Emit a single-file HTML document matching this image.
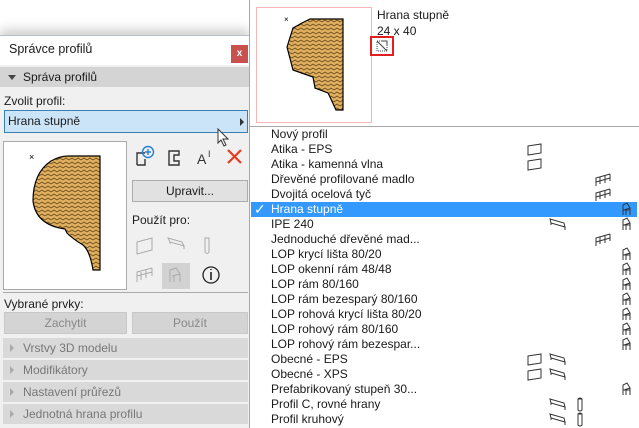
<!DOCTYPE html>
<html><head><meta charset="utf-8"><style>
*{margin:0;padding:0;box-sizing:border-box}
body{width:639px;height:428px;overflow:hidden;background:#fff;font-family:"Liberation Sans",sans-serif;font-size:12px;color:#1a1a1a;position:relative}
.a{position:absolute;white-space:nowrap}
#lp{position:absolute;left:0;top:35px;width:249px;height:393px;background:#f0f0f0;box-shadow:0 -6px 10px rgba(0,0,0,.18)}
.sec{position:absolute;left:3px;width:245px;height:20px;background:#d9d9d9;color:#777;padding-left:20px;line-height:20px}
.sec:before{content:"";position:absolute;left:7px;top:6px;border-left:4px solid #aaa;border-top:4px solid transparent;border-bottom:4px solid transparent}
.row{position:absolute;left:251px;width:386px;height:15px;line-height:15px;padding-left:20px}
</style></head><body>
<svg width="0" height="0" style="position:absolute"><defs>
<pattern id="hp" width="6" height="4" patternUnits="userSpaceOnUse"><rect width="6" height="4" fill="#e0b060"/><path d="M0,3 L3,1 L6,3" stroke="#6b4a1a" stroke-width=".8" fill="none"/></pattern>
</defs></svg>

<div id="lp">
 <div class="a" style="left:0;top:0;width:249px;height:30px;background:#fff;border-top:1px solid #b8bfc8"></div>
 <div class="a" style="left:9px;top:7px;font-size:12.5px">Správce profilů</div>
 <div class="a" style="left:231px;top:10px;width:17px;height:18px;background:#c8504f;color:#fff;font-size:10px;font-weight:bold;text-align:center;line-height:17px">x</div>
 <div class="a" style="left:0;top:32px;width:249px;height:20px;background:#d4d4d4"></div>
 <div class="a" style="left:8px;top:40px;border-top:5px solid #444;border-left:4px solid transparent;border-right:4px solid transparent"></div>
 <div class="a" style="left:23px;top:35px">Správa profilů</div>
 <div class="a" style="left:4px;top:59px">Zvolit profil:</div>
 <div class="a" style="left:4px;top:75px;width:244px;height:23px;background:#cce4f7;border:1px solid #3c7fb1;line-height:21px;padding-left:3px">Hrana stupně</div>
 <div class="a" style="left:240px;top:83px;border-left:4px solid #333;border-top:4px solid transparent;border-bottom:4px solid transparent"></div>
 <svg class="a" style="left:217px;top:93px" width="14" height="20"><path d="M1,1 L1,15 L4,12 L7,18 L9,17 L6,11 L11,11 Z" fill="#fff" stroke="#333"/></svg>
 <div class="a" style="left:3px;top:106px;width:124px;height:149px;background:#fff;border:1px solid #aaa"></div>
 <svg class="a" style="left:3px;top:106px" width="124" height="149">
  <text x="26" y="19" font-size="9" font-family="Liberation Sans">×</text>
  <path d="M97,15 L97,129 L90,129 Q87,110 80,104 Q70,98 64,92 L62,88 Q33,84 30,60 Q30,32 48,20 Q57,15 65,15 Z" fill="url(#hp)" stroke="#000" stroke-width="1.2"/>
 </svg>
 <svg class="a" style="left:135px;top:110px" width="115" height="24" fill="none" stroke="#333" stroke-width="1.4">
  <path d="M2,20 L2,8 L10,8 M2,20 L10,20 L10,14"/><circle cx="13" cy="7" r="5.5" stroke="#2a7fd4"/><path d="M13,4 V10 M10,7 H16" stroke="#2a7fd4"/>
  <path d="M34,20 L34,6 L44,6 L44,10 L39,10 L39,16 L44,16 L44,20 Z"/>
  <text x="62" y="19" font-size="14" fill="#333" stroke="none" font-family="Liberation Sans">A</text><text x="73" y="12" font-size="9" fill="#333" stroke="none">I</text>
  <path d="M93,5 L106,18 M106,5 L93,18" stroke="#e83a1e" stroke-width="2.2"/>
 </svg>
 <div class="a" style="left:132px;top:145px;width:116px;height:22px;background:#e1e1e1;border:1px solid #adadad;text-align:center;line-height:20px">Upravit...</div>
 <div class="a" style="left:132px;top:178px">Použít pro:</div>
 <svg class="a" style="left:132px;top:195px" width="116" height="60" fill="none" stroke="#aaa">
  <path d="M5,12 L20,8 L20,20 L5,24 Z"/><path d="M36,8 L50,12 L52,16 L38,12 Z M38,12 L38,14 M52,16 L52,19"/><path d="M73,8 V22 Q75,25 77,22 V8 Z"/>
  <path d="M5,52 L5,42 L20,38 M5,46 L20,42 M9,50 V42 M14,48 V40 M20,46 V38"/>
  <rect x="30" y="33" width="28" height="26" fill="#d2d2d2" stroke="none"/><path d="M38,52 V40 L44,38 L48,44 L40,46 M42,46 V52 M48,44 V52"/>
  <circle cx="79" cy="45" r="8" stroke="#222" stroke-width="1.3"/><path d="M79,42 V50 M79,39 V40" stroke="#222" stroke-width="1.6"/>
 </svg>
 <div class="a" style="left:3px;top:257px;width:245px;height:1px;background:#aaa"></div>
 <div class="a" style="left:4px;top:262px">Vybrané prvky:</div>
 <div class="a" style="left:4px;top:277px;width:123px;height:22px;background:#d4d4d4;border:1px solid #c8c8c8;color:#888;text-align:center;line-height:20px">Zachytit</div>
 <div class="a" style="left:132px;top:277px;width:116px;height:22px;background:#d4d4d4;border:1px solid #c8c8c8;color:#888;text-align:center;line-height:20px">Použít</div>
 <div class="sec" style="top:303px">Vrstvy 3D modelu</div>
 <div class="sec" style="top:325px">Modifikátory</div>
 <div class="sec" style="top:347px">Nastavení průřezů</div>
 <div class="sec" style="top:369px">Jednotná hrana profilu</div>
</div>

<div class="a" style="left:249px;top:0;width:390px;height:428px;background:#fff;border-left:1px solid #a8a8a8"></div>
<div class="a" style="left:256px;top:7px;width:116px;height:116px;border:1px solid #f4b8b8"></div>
<svg class="a" style="left:256px;top:7px" width="116" height="116">
 <text x="28" y="15" font-size="8" font-family="Liberation Sans">×</text>
 <path d="M54,12 L87,12 L87,103 L80,103 L74,90 L72,86 L59,81 L57,70 L37,63 L31,40 L37,21 L46,16 Z" fill="url(#hp)" stroke="#000" stroke-width="1.2"/>
</svg>
<div class="a" style="left:377px;top:8px">Hrana stupně</div>
<div class="a" style="left:377px;top:24px">24 x 40</div>
<div class="a" style="left:370px;top:36px;width:24px;height:20px;border:2px solid #e02020"></div>
<svg class="a" style="left:375px;top:39px" width="14" height="14" fill="none" stroke="#444"><rect x="2" y="2" width="10" height="10" stroke-dasharray="1,1"/><path d="M2,2 L12,12 M7,2 L12,2 L12,7"/></svg>
<div class="a" style="left:250px;top:126px;width:389px;height:1px;background:#a8a8a8"></div>

<div class="row" style="top:127px">Nový profil</div>
<div class="row" style="top:142px">Atika - EPS</div>
<div class="row" style="top:157px">Atika - kamenná vlna</div>
<div class="row" style="top:172px">Dřevěné profilované madlo</div>
<div class="row" style="top:187px">Dvojitá ocelová tyč</div>
<div class="row" style="top:202px;background:#3399ff;color:#fff">Hrana stupně</div>
<div class="a" style="left:254px;top:201px;color:#fff;font-size:14px">✓</div>
<div class="row" style="top:217px">IPE 240</div>
<div class="row" style="top:232px">Jednoduché dřevěné mad...</div>
<div class="row" style="top:247px">LOP krycí lišta 80/20</div>
<div class="row" style="top:262px">LOP okenní rám 48/48</div>
<div class="row" style="top:277px">LOP rám 80/160</div>
<div class="row" style="top:292px">LOP rám bezesparý 80/160</div>
<div class="row" style="top:307px">LOP rohová krycí lišta 80/20</div>
<div class="row" style="top:322px">LOP rohový rám 80/160</div>
<div class="row" style="top:337px">LOP rohový rám bezespar...</div>
<div class="row" style="top:352px">Obecné - EPS</div>
<div class="row" style="top:367px">Obecné - XPS</div>
<div class="row" style="top:382px">Prefabrikovaný stupeň 30...</div>
<div class="row" style="top:397px">Profil C, rovné hrany</div>
<div class="row" style="top:412px">Profil kruhový</div>

<svg class="a" style="left:250px;top:127px" width="389" height="301" fill="none" stroke="#333" stroke-width="1">
 <defs>
  <path id="w" d="M0,3 L13,1 L13,10 L0,12 Z"/>
  <path id="b" d="M0,1 L14,5 L15,9 L1,5 Z M1,5 V7 M15,9 V12"/>
  <path id="c" d="M0,1 V12 Q2,14 4,12 V1 Z M0,1 Q2,-1 4,1"/>
  <path id="r" d="M0,13 V5 L14,1 M0,9 L14,5 M4,11 V4 M9,10 V3 M14,8 V1"/>
  <path id="h" d="M2,13 V3 L6,1 L9,6 L3,8 M5,8 V13 M9,6 V13 M2,8 L9,8"/>
 </defs>
 <use href="#w" x="278" y="16"/><use href="#w" x="278" y="31"/>
 <use href="#r" x="346" y="46"/><use href="#r" x="346" y="61"/>
 <use href="#h" x="371" y="75"/>
 <use href="#b" x="300" y="91"/><use href="#h" x="371" y="90"/>
 <use href="#r" x="346" y="106"/>
 <use href="#h" x="371" y="120"/><use href="#h" x="371" y="135"/><use href="#h" x="371" y="150"/><use href="#h" x="371" y="165"/><use href="#h" x="371" y="180"/><use href="#h" x="371" y="195"/><use href="#h" x="371" y="210"/>
 <use href="#w" x="278" y="226"/><use href="#b" x="300" y="226"/>
 <use href="#w" x="278" y="241"/><use href="#b" x="300" y="241"/>
 <use href="#h" x="371" y="255"/>
 <use href="#b" x="300" y="271"/><use href="#c" x="328" y="271"/>
 <use href="#b" x="300" y="286"/><use href="#c" x="328" y="286"/>
</svg>
</body></html>
